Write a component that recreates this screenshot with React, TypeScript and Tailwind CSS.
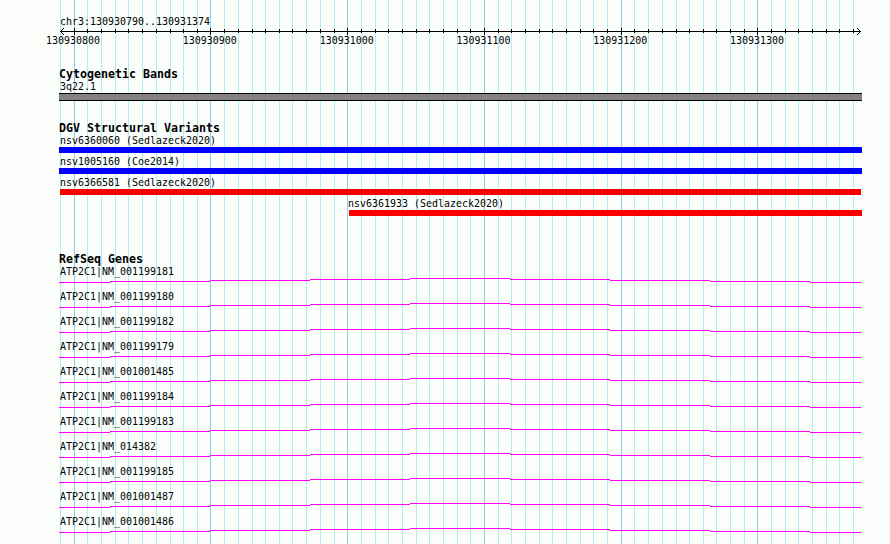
const gridLines = [
    60, 74, 87, 101, 115, 128, 142, 156, 170, 183, 197, 210, 224, 238, 252, 265, 279, 292, 306, 320,
    334, 347, 361, 375, 388, 402, 416, 429, 443, 457, 470, 484, 498, 511, 525, 539, 552, 566, 580, 593,
    607, 621, 634, 648, 662, 676, 689, 703, 716, 730, 744, 757, 771, 785, 798, 812, 826, 839, 853,
];

const majorLines = [74, 210, 347, 484, 621, 757];

const variants = [
    { name: "nsv6360060 (Sedlazeck2020)", row: "pl-0", bar: "-ml-px w-[803px] bg-[#0000ff]" },
    { name: "nsv1005160 (Coe2014)", row: "pl-0", bar: "-ml-px w-[803px] bg-[#0000ff]" },
    { name: "nsv6366581 (Sedlazeck2020)", row: "pl-0", bar: "w-[801px] bg-[#ff0000]" },
    { name: "nsv6361933 (Sedlazeck2020)", row: "pl-72", bar: "ml-px w-[513px] bg-[#ff0000]" },
];

const genes = [
    "NM_001199181",
    "NM_001199180",
    "NM_001199182",
    "NM_001199179",
    "NM_001001485",
    "NM_001199184",
    "NM_001199183",
    "NM_014382",
    "NM_001199185",
    "NM_001001487",
    "NM_001001486",
];

function Grid() {
    return (
        <svg className="absolute inset-0" width="890" height="544" shapeRendering="crispEdges">
            {gridLines.map((x) => (
                <rect key={x} x={x} y="0" width="1" height="544" fill={majorLines.includes(x) ? "#87ceeb" : "#afeeee"} />
            ))}
        </svg>
    );
}

function Ruler() {
    return (
        <svg className="block" width="890" height="7" shapeRendering="crispEdges">
            <rect x="60" y="3" width="801" height="1" />
            {gridLines.slice(1).map((x) =>
                majorLines.includes(x) ? (
                    <rect key={x} x={x} y="0" width="1" height="7" />
                ) : (
                    <rect key={x} x={x} y="1" width="1" height="4" />
                )
            )}
            <path d="M61 2h1v1h-1zM62 1h1v1h-1zM63 0h1v1h-1zM61 4h1v1h-1zM62 5h1v1h-1zM63 6h1v1h-1z" />
            <path d="M859 2h1v1h-1zM858 1h1v1h-1zM857 0h1v1h-1zM859 4h1v1h-1zM858 5h1v1h-1zM857 6h1v1h-1z" />
        </svg>
    );
}

// Intron spans the whole view, drawn as a shallow stepped hat
function Intron() {
    return (
        <svg className="-ml-px block" width="802" height="5" shapeRendering="crispEdges" fill="#ff00ff">
            <path d="M0 4h51v1h-51zM51 3h100v1h-100zM151 2h100v1h-100zM251 1h100v1h-100zM351 0h100v1h-100zM451 1h100v1h-100zM551 2h100v1h-100zM651 3h100v1h-100zM751 4h51v1h-51z" />
        </svg>
    );
}

function Label({ children }: { children: string }) {
    return <div className="h-3 origin-center scale-y-[1.1] text-[9.97px] leading-3 whitespace-pre">{children}</div>;
}

function Title({ children }: { children: string }) {
    return <h2 className="mb-px -ml-px h-3 text-[11.63px] leading-3 font-bold whitespace-pre">{children}</h2>;
}

export default function App() {
    return (
        <div className="relative h-[544px] w-[890px] overflow-hidden bg-[#fcfefc] font-['DejaVu_Sans_Mono',monospace] text-black">
            <Grid />
            <div className="relative flex flex-col">
                <header className="pt-4">
                    <div className="pl-[60px]">
                        <Label>chr3:130930790..130931374</Label>
                    </div>
                    <Ruler />
                    <div className="flex gap-[82.8px] pl-[46px]">
                        <Label>130930800</Label>
                        <Label>130930900</Label>
                        <Label>130931000</Label>
                        <Label>130931100</Label>
                        <Label>130931200</Label>
                        <Label>130931300</Label>
                    </div>
                </header>

                <section className="mt-[21px] pl-[60px]">
                    <Title>Cytogenetic Bands</Title>
                    <Label>3q22.1</Label>
                    <div className="-ml-px h-2 w-[803px] border-y border-black bg-[#848284]" />
                </section>

                <section className="mt-[21px] pl-[60px]">
                    <Title>DGV Structural Variants</Title>
                    <div className="flex flex-col gap-[3px]">
                        {variants.map((v) => (
                            <div key={v.name} className={v.row}>
                                <Label>{v.name}</Label>
                                <div className={`h-1.5 ${v.bar}`} />
                            </div>
                        ))}
                    </div>
                </section>

                <section className="mt-[37px] pl-[60px]">
                    <Title>RefSeq Genes</Title>
                    <div className="flex flex-col gap-2">
                        {genes.map((id) => (
                            <div key={id}>
                                <Label>{`ATP2C1|${id}`}</Label>
                                <Intron />
                            </div>
                        ))}
                    </div>
                </section>
            </div>
        </div>
    );
}
